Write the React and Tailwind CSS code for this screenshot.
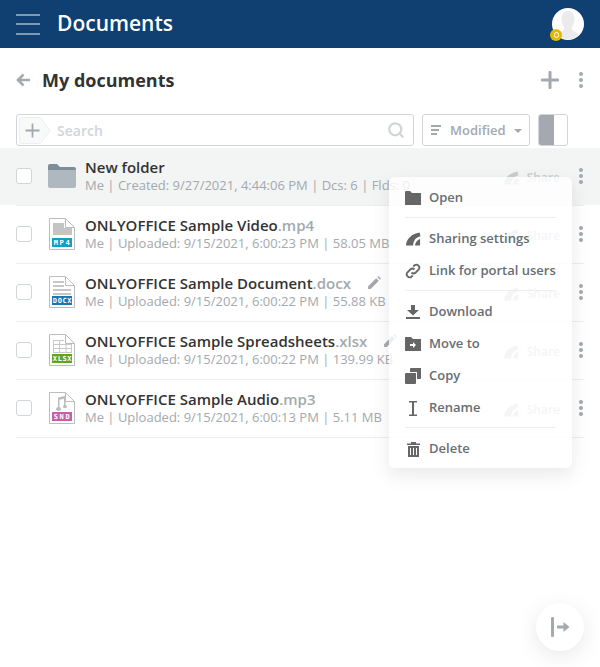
import { Search } from 'lucide-react';

const files = [
  { name: 'ONLYOFFICE Sample Video', ext: '.mp4', meta: 'Me | Uploaded: 9/15/2021, 6:00:23 PM | 58.05 MB', type: 'mp4' },
  { name: 'ONLYOFFICE Sample Document', ext: '.docx', meta: 'Me | Uploaded: 9/15/2021, 6:00:22 PM | 55.88 KB', type: 'docx', edit: true },
  { name: 'ONLYOFFICE Sample Spreadsheets', ext: '.xlsx', meta: 'Me | Uploaded: 9/15/2021, 6:00:22 PM | 139.99 KB', type: 'xlsx', edit: true },
  { name: 'ONLYOFFICE Sample Audio', ext: '.mp3', meta: 'Me | Uploaded: 9/15/2021, 6:00:13 PM | 5.11 MB', type: 'snd' },
];

const badge = {
  mp4: { color: '#0f9fc7', label: 'MP4' },
  docx: { color: '#1b75ae', label: 'DOCX' },
  xlsx: { color: '#5fa51f', label: 'XLSX' },
  snd: { color: '#c95ea9', label: 'SND' },
};

const FileIcon = ({ type }) => (
  <svg width="26" height="32" viewBox="0 0 26 32" fill="none" className="ml-px shrink-0">
    <path d="M.5 .5h16l9 9v22H.5V.5z" fill="#fff" stroke="#bdbdbd" />
    <path d="M16.500 .5v9h9" stroke="#bdbdbd" fill="none" />
    {type === 'mp4' && <path d="M4 5h11v5h8v7H4z" fill="#c4c4c4" />}
    {type === 'docx' && <path d="M4 6h11M4 10h11M4 14h18M4 18h18" stroke="#b5b5b5" strokeWidth="1.6" />}
    {type === 'xlsx' && <path d="M4 10.500h19M4 14.500h19M4 18.500h19M4 6.500h11M4.500 6v13M10.500 6v13M17 10v9M22.500 10v9" stroke="#c8c8c8" />}
    {type === 'snd' && (
      <g fill="#bdbdbd">
        <path d="M9 5.500l7-1.500v2.500l-5.500 1.200V16H9z" />
        <ellipse cx="9.500" cy="17" rx="2.500" ry="2" />
        <path d="M15 4h1.500v11H15z" />
        <ellipse cx="16" cy="14.500" rx="2" ry="1.800" />
      </g>
    )}
    <rect x="3" y="20" width="20" height="9" fill={badge[type].color} />
    <text x="13.500" y="27" textAnchor="middle" fontSize="7" fontWeight="700" letterSpacing={type === 'docx' || type === 'xlsx' ? '.6' : '1.6'} fill="#fff" fontFamily="'DejaVu Sans Mono', monospace">
      {badge[type].label}
    </text>
  </svg>
);

const ShareIcon = ({ className, color = '#c8cdd0' }) => (
  <svg width="15" height="14" viewBox="0 0 16 14" className={className}>
    <path d="M0 14C.3 7 5.500 1.500 14.500 0l1 4C10.500 5 8 8.500 7.600 14z" fill={color} />
    <path d="M9.500 14c.3-3 2.500-6 5.500-7v7z" fill={color} />
  </svg>
);

const Dots = () => (
  <div className="flex w-[4px] shrink-0 flex-col gap-[2px]">
    <span className="size-[4px] rounded-full bg-[#a3a9ae]" />
    <span className="size-[4px] rounded-full bg-[#a3a9ae]" />
    <span className="size-[4px] rounded-full bg-[#a3a9ae]" />
  </div>
);

const Row = ({ icon, title, ext, meta, edit, active }) => (
  <div className={`flex h-[57px] items-center pr-[17px] pb-px pl-4 ${active ? 'bg-[#f3f4f4]' : ''}`}>
    <span className="size-4 shrink-0 rounded-[3px] border border-[#d0d5da] bg-white" />
    <div className="ml-4 flex w-[37px] shrink-0">{icon}</div>
    <div className="min-w-0 flex-1 pb-[2px]">
      <div className="flex items-center text-[15px] leading-[20px] font-semibold whitespace-nowrap text-[#333]">
        {title}
        <span className="text-[#a3a9ae]">{ext}</span>
        {edit && (
          <svg width="14" height="14" viewBox="0 0 13 13" className="ml-4" fill="#a3a9ae">
            <path d="M1 9.500L8.500 2l2.500 2.500L3.500 12H1zM9.500 1l1-1 2.500 2.500-1 1z" />
          </svg>
        )}
      </div>
      <div className="text-[13px] leading-[16px] whitespace-nowrap text-[#a3a9ae]">{meta}</div>
    </div>
    <ShareIcon className="mt-[3px] mr-2 shrink-0" />
    <span className="mt-[4px] mr-[19px] text-[12px] font-semibold text-[#c8cdd0]">Share</span>
    <Dots />
  </div>
);

const MenuItem = ({ icon, label }) => (
  <div className="flex h-[32px] items-center pl-4">
    <div className="mr-2 flex w-4 shrink-0 justify-center">{icon}</div>
    <span className="text-[13px] font-semibold text-[#666e74]">{label}</span>
  </div>
);

const Divider = () => <div className="mx-4 mt-[3px] mb-[5px] h-px bg-[#eceef1]" />;

export default function App() {
  return (
    <div className="relative h-[667px] w-[600px] overflow-hidden bg-white font-['Open_Sans',sans-serif]">
      <header className="flex h-[48px] items-center bg-[#0f4071] pr-4 pl-4">
        <div className="flex w-[24px] flex-col gap-[7.500px]">
          <span className="h-[2px] bg-[#7f9ab4]" />
          <span className="h-[2px] bg-[#7f9ab4]" />
          <span className="h-[2px] bg-[#7f9ab4]" />
        </div>
        <h1 className="ml-[17px] flex-1 text-[21px] font-semibold text-white">Documents</h1>
        <div className="relative size-8 rounded-full bg-white">
          <svg viewBox="0 0 32 32" className="size-8">
            <path d="M16 3c4 0 6.500 3.500 6.500 8 0 4-1.500 7-3 9 0 2 2 3 5 4.500L27 26a14 14 0 01-22 0l2.500-1.500c3-1.500 5-2.500 5-4.500-1.500-2-3-5-3-9 0-4.500 2.500-8 6.500-8z" fill="#ebebeb" />
          </svg>
          <span className="absolute bottom-[-1px] left-[-2px] flex size-[12px] items-center justify-center rounded-full bg-[#e6b800]">
            <span className="h-[6px] w-[5px] rounded-full border border-[#fff] bg-[#e6b800]" />
          </span>
        </div>
      </header>

      <div className="flex h-[66px] items-center pr-[17px] pb-[2px] pl-4">
        <svg width="16" height="14" viewBox="0 0 16 14" fill="none" stroke="#a3a9ae" strokeWidth="2.500">
          <path d="M14 7H2M7.500 1.500L2 7l5.500 5.500" />
        </svg>
        <h2 className="ml-[10px] flex-1 text-[18px] font-bold text-[#333]">My documents</h2>
        <svg width="18" height="18" viewBox="0 0 18 18" className="mr-[20px]" fill="#a3a9ae">
          <rect x="7.500" y="0" width="3" height="18" rx="1" />
          <rect x="0" y="7.500" width="18" height="3" rx="1" />
        </svg>
        <Dots />
      </div>

      <div className="flex h-[32px] items-stretch pl-4">
        <div className="flex w-[398px] items-center rounded-[3px] border border-[#d0d5da] pr-2">
          <svg width="32" height="27" viewBox="0 0 32 27" fill="none" className="ml-[2px] shrink-0">
            <path d="M2.500 .5h19L31 13.500 21.500 26.500h-19a2 2 0 01-2-2v-22a2 2 0 012-2z" fill="#f8f9f9" stroke="#eceef1" />
            <path d="M13.500 6.500v14M6.500 13.500h14" stroke="#a3a9ae" strokeWidth="1.800" />
          </svg>
          <span className="ml-[6px] flex-1 text-[14px] font-semibold text-[#d0d5da]">Search</span>
          <Search size={18} strokeWidth={3} className="text-[#d0d5da]" />
        </div>
        <div className="ml-2 flex w-[108px] items-center rounded-[3px] border border-[#d0d5da] pl-2">
          <div className="flex flex-col gap-[2px]">
            <span className="h-[2px] w-[10px] bg-[#a3a9ae]" />
            <span className="h-[2px] w-[8px] bg-[#a3a9ae]" />
            <span className="h-[2px] w-[6px] bg-[#a3a9ae]" />
          </div>
          <span className="ml-[9px] pt-px text-[13px] font-semibold text-[#a3a9ae]">Modified</span>
          <span className="mt-[1px] ml-2 border-x-[4px] border-t-[4px] border-x-transparent border-t-[#a3a9ae]" />
        </div>
        <div className="ml-2 flex w-[30px] overflow-hidden rounded-[3px] border border-[#d0d5da]">
          <span className="w-[15px] bg-[#a3a9ae]" />
        </div>
      </div>

      <div className="mt-[2px]">
        <Row
          active
          title="New folder"
          meta="Me | Created: 9/27/2021, 4:44:06 PM | Dcs: 6 | Flds: 0"
          icon={
            <svg width="28" height="24" viewBox="0 0 28 24">
              <path d="M0 2a2 2 0 012-2h7l3 3h14a2 2 0 012 2v2H0z" fill="#7f8d99" />
              <path d="M0 6h28v16a2 2 0 01-2 2H2a2 2 0 01-2-2z" fill="#b0b8bf" />
            </svg>
          }
        />
        <div className="mx-4 h-px bg-[#eceef1]" />
        {files.map((f) => (
          <div key={f.name}>
            <Row icon={<FileIcon type={f.type} />} title={f.name} ext={f.ext} meta={f.meta} edit={f.edit} />
            <div className="mx-4 h-px bg-[#eceef1]" />
          </div>
        ))}
      </div>

      {/* context menu */}
      <div className="absolute top-[177px] left-[389px] w-[183px] rounded-[6px] bg-white/80 pt-[5px] pb-[3px] shadow-[0_7px_18px_rgba(85,85,85,0.13)]">
        <MenuItem
          label="Open"
          icon={
            <svg width="16" height="14" viewBox="0 0 16 14" fill="#666">
              <path d="M0 1a1 1 0 011-1h4l2 2h9v12H0z" />
            </svg>
          }
        />
        <Divider />
        <MenuItem label="Sharing settings" icon={<ShareIcon color="#666" />} />
        <MenuItem
          label="Link for portal users"
          icon={
            <svg width="16" height="16" viewBox="0 0 16 16" fill="none" stroke="#666" strokeWidth="1.800">
              <path d="M6.500 9.500a3 3 0 004.200 0l3-3a3 3 0 00-4.200-4.200L8.300 3.500M9.500 6.500a3 3 0 00-4.200 0l-3 3a3 3 0 004.200 4.200l1.200-1.200" />
            </svg>
          }
        />
        <Divider />
        <MenuItem
          label="Download"
          icon={
            <svg width="14" height="14" viewBox="0 0 14 14" fill="#666">
              <path d="M5 0h4v5h4L7 10.500 1 5h4zM0 12h14v2H0z" />
            </svg>
          }
        />
        <MenuItem
          label="Move to"
          icon={
            <svg width="16" height="14" viewBox="0 0 16 14" fill="#666" fillRule="evenodd">
              <path d="M0 0h6l2 2h8v12H0zM5 7v2h3v2l3-3-3-3v2z" />
            </svg>
          }
        />
        <MenuItem
          label="Copy"
          icon={
            <svg width="16" height="16" viewBox="0 0 16 16" fill="#666">
              <path d="M5 1a1 1 0 011-1h10v10a1 1 0 01-1 1h-3V4H5z" />
              <path d="M0 6a1 1 0 011-1h10v10a1 1 0 01-1 1H1a1 1 0 01-1-1z" />
            </svg>
          }
        />
        <MenuItem
          label="Rename"
          icon={
            <svg width="8" height="15" viewBox="0 0 8 15" fill="#666">
              <path d="M0 0h8v1.500H5v12h3V15H0v-1.500h3v-12H0z" />
            </svg>
          }
        />
        <Divider />
        <MenuItem
          label="Delete"
          icon={
            <svg width="13" height="15" viewBox="0 0 13 15" fill="#666">
              <path d="M4 0h5v1.500h4V3H0V1.500h4zM1 4h11v11H1zM3 6v7h1V6zM6 6v7h1V6zM9 6v7h1V6z" fillRule="evenodd" />
            </svg>
          }
        />
      </div>

      {/* floating button */}
      <div className="absolute top-[603px] left-[536px] flex size-[48px] items-center justify-center rounded-full bg-white shadow-[0_5px_20px_rgba(85,85,85,0.13)]">
        <svg width="20" height="20" viewBox="0 0 20 20" fill="#a3a9ae">
          <rect x="1" y="0" width="3" height="20" rx="1" />
          <path d="M7 8.500h6.500V5l6 5-6 5v-3.500H7z" />
        </svg>
      </div>
    </div>
  );
}
